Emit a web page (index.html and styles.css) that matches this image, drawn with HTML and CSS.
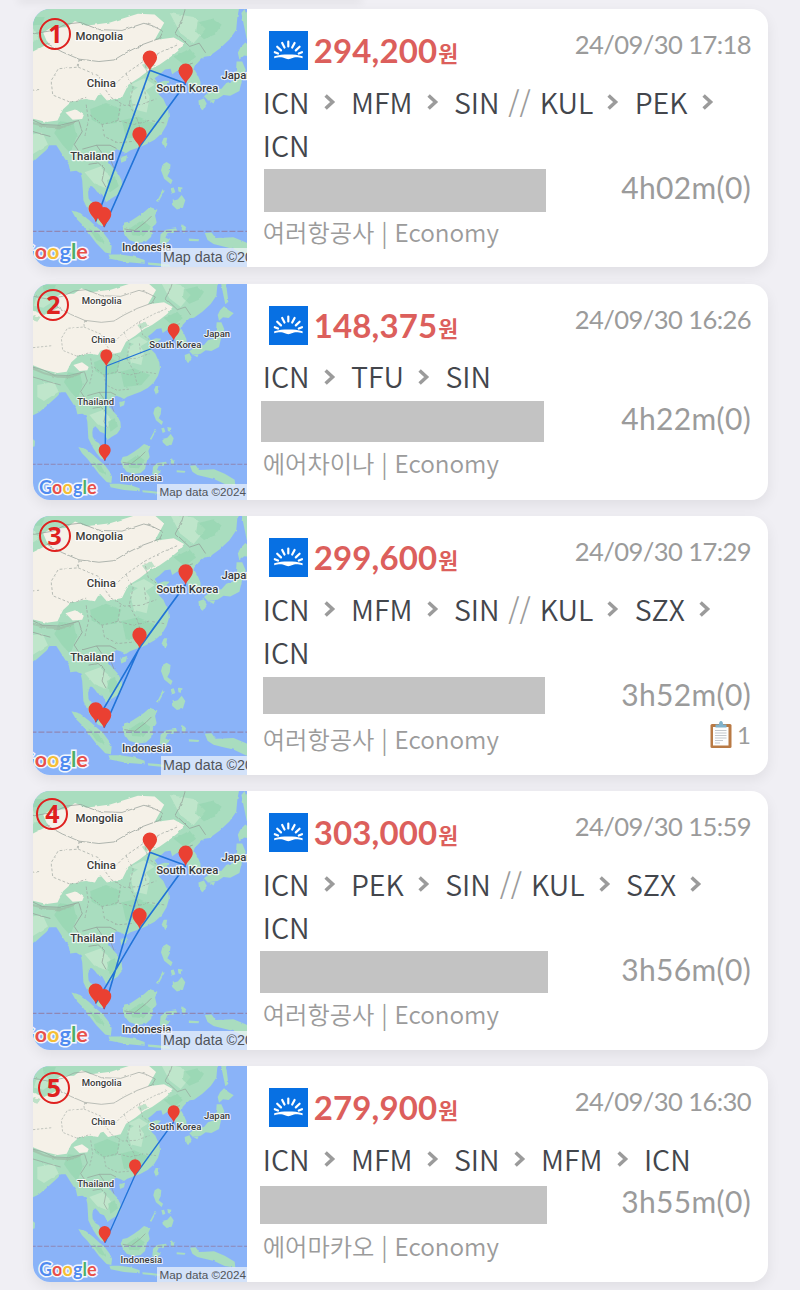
FILE: index.html
```html
<!DOCTYPE html>
<html lang="ko">

<head>
  <meta charset="UTF-8" />
  <title>항공권 목록</title>
  <link rel="stylesheet" href="styles.css">
</head>

<body>
  <!-- Shared shapes -->
  <svg class="defs" width="0" height="0">
    <defs>
      <filter id="rough" x="0" y="0" width="100%" height="100%">
        <feTurbulence type="fractalNoise" baseFrequency="0.06" numOctaves="2" seed="4" result="n" />
        <feDisplacementMap in="SourceGraphic" in2="n" scale="6" xChannelSelector="R" yChannelSelector="G" />
      </filter>

      <g id="land">
        <rect x="0" y="-10" width="700" height="720" fill="#8ab3f8" />
        <g filter="url(#rough)">
          <rect x="0" y="-10" width="700" height="720" fill="none" />
          <g fill="#a9ddbf">
            <path d="M0-10H588L580 30 577 62 560 87 535 110 510 128 497 130 485 140 476 150 472 162 480 176 487 192 488 206 478 215 463 216 456 200 452 188 444 178 438 166 428 166 416 174 412 160 398 162 384 175 372 184 380 196 396 190 412 191 400 202 386 214 382 224 394 236 400 250 406 262 408 282 402 302 390 322 372 338 350 350 330 358 310 365 300 372 288 366 276 362 266 370 258 382 256 394 266 407 280 422 289 440 291 460 279 476 262 486 250 495 245 484 240 475 228 470 222 462 214 454 207 460 205 472 206 485 214 498 225 505 233 520 238 538 242 555 230 550 218 535 208 520 200 505 193 490 192 470 190 440 186 422 175 416 160 418 156 400 146 385 134 366 125 352 110 352 100 364 85 377 65 395 45 412 27 421 0 430Z" />
            <path d="M598 10 608 40 613 80 604 88 596 50 590 20Z" />
            <path d="M588 106 600 94 614 106 629 115 614 129 597 127 585 137 581 120Z" />
            <path d="M578 142 592 142 601 163 592 186 585 216 562 228 545 226 530 236 506 239 496 229 516 213 540 210 552 196 570 190 576 170Z" />
            <path d="M482 240 496 235 503 248 493 264 484 258ZM508 240 524 238 520 247Z" />
            <path d="M395 333 406 333 403 352 396 359 390 345Z" />
            <path d="M286 382 303 377 300 391 288 396Z" />
            <path d="M392 400 402 394 412 400 410 418 404 430 417 440 413 450 396 436 388 415Z" />
            <path d="M415 492 430 488 440 477 449 490 443 509 428 513 416 502ZM412 460 420 458 424 470 416 474ZM430 456 442 458 440 470 432 468ZM378 492 394 462 397 466 382 494Z" />
            <path d="M296 546 310 543 330 530 345 520 360 507 379 514 373 528 377 546 368 560 363 582 350 594 330 597 308 590 298 577 290 560Z" />
            <path d="M163 516 185 522 208 540 224 555 242 570 257 590 264 605 262 624 248 621 225 597 205 571 190 551 174 535Z" />
            <path d="M256 626 285 626 320 631 347 640 347 649 300 645 260 637ZM355 646 382 648 410 652 408 657 356 652Z" />
            <path d="M387 575 400 564 426 560 429 567 404 573 399 584 412 590 401 598 408 613 398 616 392 600 385 598ZM442 550 452 556 448 572 440 564Z" />
            <path d="M498 572 515 571 525 585 545 584 570 583 602 596 632 614 634 632 602 627 570 612 545 606 520 600 505 590ZM458 586 484 588 482 593 458 592Z" />
            <path d="M20 486 33 498 32 514 20 518Z" />
          </g>
          <path fill="#f5f1e8" d="M0 96 60 120 104 98 92 70 110 58 150 56 172 40 200 52 260 44 330 22 372 24 396 45 372 88 420 82 446 96 430 116 410 132 384 150 360 162 334 182 306 200 290 232 252 240 238 224 200 236 166 240 142 262 128 290 100 294 60 284 27 271 0 268Z" />
          <path fill="#f5f1e8" d="M148 270 174 262 194 276 190 286 166 288ZM200 236 214 222 230 226 222 240Z" />
          <path fill="#bfe6cb" d="M36 70 70 60 80 84 58 98 30 92ZM410 20 470 30 500 60 470 96 436 70ZM310 220 340 200 360 230 352 270 320 262ZM196 420 234 406 262 430 250 460 220 448ZM40 330 90 320 104 350 60 378 40 366ZM310 200 345 184 372 200 350 214Z" />
          <path fill="#8fd3ad" opacity=".55" d="M132 292 168 296 176 330 160 372 140 350 120 322ZM480 44 520 34 540 50 524 74 496 86 476 68ZM210 262 250 246 288 262 276 296 236 300 214 288ZM290 290 330 280 378 300 352 330 300 336ZM420 130 460 110 476 130 448 152ZM30 120 50 126 40 140 20 134ZM56 30 96 30 88 50 60 52ZM310 560 340 540 362 556 344 580 316 578ZM252 440 272 430 282 454 260 470ZM340 150 364 140 372 152 350 164ZM206 560 232 574 246 600 226 590Z" />
          <path fill="#9fb5a4" d="M27 276 60 292 100 302 140 304 176 290 170 298 140 310 100 308 60 298 27 284Z" opacity=".6" />
          <path fill="none" stroke="#929b96" stroke-width="1.8" d="M0 58 70 72 116 64 150 48 186 44 232 62 290 64 345 46 366 52 394 66 384 84 340 100 300 120 270 138 232 142 182 136 140 118 100 96M0 268 60 286 90 300 134 302 182 290M182 292 190 318 170 350 186 374M190 362 226 352 260 352 276 360M226 352 240 372 262 390 270 410M206 400 230 396 246 410 240 440 250 458M27 306 74 320 110 330M452 0 440 40 424 70M424 70 460 104 484 96 500 120M430 166 446 152 468 146M296 562 322 566 350 544 364 530" />
          <path fill="none" stroke="#9aa39d" stroke-width="1.7" stroke-dasharray="7 5" d="M27 218 84 212M182 136 180 156 130 160 112 190 116 226 160 244 200 232M180 156 232 178 244 206 262 232M272 200 300 172 346 140 392 116 430 100M300 172 318 206 308 250 330 290M262 232 296 252 336 250 376 236M210 276 240 300 280 290 318 300 360 290 396 296M240 300 246 330 280 346 320 342M280 290 286 250M330 290 340 330M346 140 356 180 376 194M350 236 346 204M200 250 206 290 196 330" />
        </g>
        <path stroke="#8f87b4" stroke-width="3" stroke-dasharray="15 5" d="M0 568H700" />
      </g>

      <g id="pin">
        <path fill="#ea4032" d="M0 2C-2-9-18-18-18-32A18 18 0 0 1 18-32C18-18 2-9 0 2Z" />
      </g>

      <symbol id="sunrise" viewBox="0 0 39 39">
        <rect width="39" height="39" fill="#0770e3" />
        <path stroke="#fff" stroke-width="2.2" stroke-linecap="round" d="M19.3 10.5V15.5M13.2 12 15.5 16.5M25.6 12 23.2 16.5M8.2 15.7 12 19.4M30.6 15.7 26.8 19.4M5.8 21.2 9 22.6M33 21.2 29.8 22.6" />
        <path fill="#fff" d="M5.2 25.3C10 24 14 23.6 19.3 23.6S29 24 33.6 25.3V27.2C29.5 26 27.5 26 25 26.4L21.3 27.8Q19.3 28.6 17.3 27.8L13.8 26.4C11 26 9 26 5.2 27.2Z" />
      </symbol>

      <symbol id="chevron" viewBox="0 0 12 16">
        <path fill="none" stroke="#9b9b9b" stroke-width="3.5" d="M1.6 1.5 8.6 8 1.6 14.5" />
      </symbol>
    </defs>
  </svg>

  <div class="prev-shadow"></div>

  <main class="list">
    <!-- 1 -->
    <article class="card tall">
      <div class="map">
        <svg class="map-img" viewBox="66.4 10.2 536.9 648" preserveAspectRatio="none">
          <use href="#land" />
          <path class="path" d="M450 197 334 356 245 557M224 543 360 164 450 197" />
          <g class="places">
            <text x="233" y="87">Mongolia</text>
            <text x="238" y="205">China</text>
            <text x="454" y="218">South Korea</text>
            <text x="579" y="185">Japan</text>
            <text x="215" y="390">Thailand</text>
            <text x="352" y="617">Indonesia</text>
          </g>
          <use href="#pin" x="360" y="164" />
          <use href="#pin" x="450" y="197" />
          <use href="#pin" x="334" y="356" />
          <use href="#pin" x="224" y="543" />
          <use href="#pin" x="245" y="557" />
        </svg>
        <div class="google"><i>G</i><i>o</i><i>o</i><i>g</i><i>l</i><i>e</i></div>
        <div class="credit">Map data ©2024</div>
        <span class="num n1">1</span>
      </div>
      <div class="info">
        <div class="head">
          <svg class="logo"><use href="#sunrise" /></svg>
          <strong class="price">294,200<small>원</small></strong>
          <time>24/09/30 17:18</time>
        </div>
        <div class="route">
          <span>ICN</span><svg><use href="#chevron" /></svg><span>MFM</span><svg><use href="#chevron" /></svg><span>SIN</span><em>//</em><span>KUL</span><svg><use href="#chevron" /></svg><span>PEK</span><svg><use href="#chevron" /></svg><span>ICN</span>
        </div>
        <div class="leg"><div class="mask m1"></div><span class="dur">4h02m(0)</span></div>
        <div class="foot"><span>여러항공사 | Economy</span></div>
      </div>
    </article>

    <!-- 2 -->
    <article class="card">
      <div class="map">
        <svg class="map-img" viewBox="27 27 641 648" preserveAspectRatio="none">
          <use href="#land" />
          <path class="path" d="M449 195 247 273 243 557" />
          <g class="places">
            <text x="233" y="87">Mongolia</text>
            <text x="238" y="205">China</text>
            <text x="454" y="218">South Korea</text>
            <text x="579" y="185">Japan</text>
            <text x="215" y="390">Thailand</text>
            <text x="352" y="617">Indonesia</text>
          </g>
          <use href="#pin" x="449" y="195" />
          <use href="#pin" x="247" y="273" />
          <use href="#pin" x="242" y="557" />
        </svg>
        <div class="google"><i>G</i><i>o</i><i>o</i><i>g</i><i>l</i><i>e</i></div>
        <div class="credit">Map data ©2024</div>
        <span class="num n2">2</span>
      </div>
      <div class="info">
        <div class="head">
          <svg class="logo"><use href="#sunrise" /></svg>
          <strong class="price">148,375<small>원</small></strong>
          <time>24/09/30 16:26</time>
        </div>
        <div class="route">
          <span>ICN</span><svg><use href="#chevron" /></svg><span>TFU</span><svg><use href="#chevron" /></svg><span>SIN</span>
        </div>
        <div class="leg"><div class="mask m2"></div><span class="dur">4h22m(0)</span></div>
        <div class="foot"><span>에어차이나 | Economy</span></div>
      </div>
    </article>

    <!-- 3 -->
    <article class="card tall">
      <div class="map">
        <svg class="map-img" viewBox="66.4 26 536.9 648" preserveAspectRatio="none">
          <use href="#land" />
          <path class="path" d="M450 197 334 356 245 557M224 543 336 354 450 197" />
          <g class="places">
            <text x="233" y="87">Mongolia</text>
            <text x="238" y="205">China</text>
            <text x="454" y="218">South Korea</text>
            <text x="579" y="185">Japan</text>
            <text x="215" y="390">Thailand</text>
            <text x="352" y="617">Indonesia</text>
          </g>
          <use href="#pin" x="450" y="197" />
          <use href="#pin" x="334" y="356" />
          <use href="#pin" x="224" y="543" />
          <use href="#pin" x="245" y="557" />
        </svg>
        <div class="google"><i>G</i><i>o</i><i>o</i><i>g</i><i>l</i><i>e</i></div>
        <div class="credit">Map data ©2024</div>
        <span class="num n3">3</span>
      </div>
      <div class="info">
        <div class="head">
          <svg class="logo"><use href="#sunrise" /></svg>
          <strong class="price">299,600<small>원</small></strong>
          <time>24/09/30 17:29</time>
        </div>
        <div class="route">
          <span>ICN</span><svg><use href="#chevron" /></svg><span>MFM</span><svg><use href="#chevron" /></svg><span>SIN</span><em>//</em><span>KUL</span><svg><use href="#chevron" /></svg><span>SZX</span><svg><use href="#chevron" /></svg><span>ICN</span>
        </div>
        <div class="leg"><div class="mask m3"></div><span class="dur">3h52m(0)</span></div>
        <div class="foot">
          <span>여러항공사 | Economy</span>
          <span class="memo">
            <svg viewBox="0 0 22 27">
              <rect x=".5" y="3" width="21" height="24" rx="1.5" fill="#b97a45" />
              <path fill="#fdfdfd" d="M3 6H18.5V24.5H3Z" />
              <path stroke="#c3c7cc" stroke-width="1" d="M5 9.5H16.5M5 12H16.5M5 14.5H16.5M5 17H16.5M5 19.5H13M5 22H10" />
              <path fill="#7fb2cc" d="M5.5 3.5H9Q9 0 11 0T13 3.5H16.5V6.5H5.5Z" />
            </svg>1
          </span>
        </div>
      </div>
    </article>

    <!-- 4 -->
    <article class="card tall">
      <div class="map">
        <svg class="map-img" viewBox="66.4 10.2 536.9 648" preserveAspectRatio="none">
          <use href="#land" />
          <path class="path" d="M450 197 360 164 245 557M224 543 336 354 450 197" />
          <g class="places">
            <text x="233" y="87">Mongolia</text>
            <text x="238" y="205">China</text>
            <text x="454" y="218">South Korea</text>
            <text x="579" y="185">Japan</text>
            <text x="215" y="390">Thailand</text>
            <text x="352" y="617">Indonesia</text>
          </g>
          <use href="#pin" x="360" y="164" />
          <use href="#pin" x="450" y="197" />
          <use href="#pin" x="334" y="354" />
          <use href="#pin" x="224" y="543" />
          <use href="#pin" x="245" y="557" />
        </svg>
        <div class="google"><i>G</i><i>o</i><i>o</i><i>g</i><i>l</i><i>e</i></div>
        <div class="credit">Map data ©2024</div>
        <span class="num n4">4</span>
      </div>
      <div class="info">
        <div class="head">
          <svg class="logo"><use href="#sunrise" /></svg>
          <strong class="price">303,000<small>원</small></strong>
          <time>24/09/30 15:59</time>
        </div>
        <div class="route">
          <span>ICN</span><svg><use href="#chevron" /></svg><span>PEK</span><svg><use href="#chevron" /></svg><span>SIN</span><em>//</em><span>KUL</span><svg><use href="#chevron" /></svg><span>SZX</span><svg><use href="#chevron" /></svg><span>ICN</span>
        </div>
        <div class="leg"><div class="mask m4"></div><span class="dur">3h56m(0)</span></div>
        <div class="foot"><span>여러항공사 | Economy</span></div>
      </div>
    </article>

    <!-- 5 -->
    <article class="card">
      <div class="map">
        <svg class="map-img" viewBox="27 27 641 648" preserveAspectRatio="none">
          <use href="#land" />
          <path class="path" d="M449 195 333 355 243 557" />
          <g class="places">
            <text x="233" y="87">Mongolia</text>
            <text x="238" y="205">China</text>
            <text x="454" y="218">South Korea</text>
            <text x="579" y="185">Japan</text>
            <text x="215" y="390">Thailand</text>
            <text x="352" y="617">Indonesia</text>
          </g>
          <use href="#pin" x="449" y="195" />
          <use href="#pin" x="333" y="357" />
          <use href="#pin" x="242" y="557" />
        </svg>
        <div class="google"><i>G</i><i>o</i><i>o</i><i>g</i><i>l</i><i>e</i></div>
        <div class="credit">Map data ©2024</div>
        <span class="num n5">5</span>
      </div>
      <div class="info">
        <div class="head">
          <svg class="logo"><use href="#sunrise" /></svg>
          <strong class="price">279,900<small>원</small></strong>
          <time>24/09/30 16:30</time>
        </div>
        <div class="route">
          <span>ICN</span><svg><use href="#chevron" /></svg><span>MFM</span><svg><use href="#chevron" /></svg><span>SIN</span><svg><use href="#chevron" /></svg><span>MFM</span><svg><use href="#chevron" /></svg><span>ICN</span>
        </div>
        <div class="leg"><div class="mask m5"></div><span class="dur">3h55m(0)</span></div>
        <div class="foot"><span>에어마카오 | Economy</span></div>
      </div>
    </article>
  </main>
</body>

</html>
```

FILE: styles.css
```css
:root {
  --bg: #f0eff4;
  --text: #43464c;
  --muted: #9b9b9b;
  --price: #dc5f5c;
  --mask: #c3c3c3;
}

* {
  box-sizing: border-box;
}

body {
  margin: 0;
  height: 1290px;
  overflow: hidden;
  background: var(--bg);
  color: var(--text);
  font-family: "Noto Sans CJK KR", sans-serif;
}

.defs {
  position: absolute;
}

/* bottom shadow of the panel scrolled off above */
.prev-shadow {
  width: 340px;
  height: 0;
  margin-left: 20px;
  box-shadow: 0 0 9px 2px rgba(0, 0, 0, 0.1);
}

.list {
  display: flex;
  flex-direction: column;
  gap: 16.6px;
  padding: 9px 32px 0 33px;
}

.card {
  display: flex;
  height: 216px;
  flex: none;
  background: #fff;
  border-radius: 17px;
  overflow: hidden;
  box-shadow: 0 5px 14px rgba(0, 0, 0, 0.07);
}

.card.tall {
  height: 258.3px;
}

/* map */
.map {
  position: relative;
  width: 213.7px;
  flex: none;
  overflow: hidden;
}

.map-img {
  display: block;
  width: 100%;
  height: 100%;
}

.path {
  fill: none;
  stroke: #2173d8;
  stroke-width: 4;
  stroke-linejoin: round;
}

.places text {
  font: 500 28.5px Roboto, sans-serif;
  text-anchor: middle;
  fill: #3a3a3a;
  stroke: rgba(255, 255, 255, 0.8);
  stroke-width: 6px;
  stroke-linejoin: round;
  paint-order: stroke;
}

.google {
  position: absolute;
  left: 6px;
  bottom: 0;
  font: 700 18.2px/26px Lato, sans-serif;
  -webkit-text-stroke: 3px #f4f7fc;
  paint-order: stroke fill;
}

.google i {
  font-style: normal;
  color: #4f8bf0;
}

.google i:nth-child(2),
.google i:nth-child(6) {
  color: #e8504a;
}

.google i:nth-child(3) {
  color: #f5bf35;
}

.google i:nth-child(5) {
  color: #4bb069;
}

.credit {
  position: absolute;
  left: 124px;
  bottom: 0;
  padding: 0 20px 0 2.5px;
  font: 11.7px/15.5px "Liberation Sans", sans-serif;
  white-space: nowrap;
  color: #50545a;
  background: rgba(240, 244, 250, 0.72);
}

.tall .google {
  left: -14px;
  font-size: 21.7px;
  line-height: 31px;
}

.tall .credit {
  left: 127.5px;
  font-size: 14.3px;
  line-height: 19px;
}

.num {
  position: absolute;
  width: 32px;
  height: 32px;
  border: 2px solid #df211f;
  border-radius: 50%;
  font: 700 25px/26.5px "Noto Sans", sans-serif;
  text-align: center;
  color: #df211f;
}

.n1 { left: 6.4px; top: 9.3px; }
.n2 { left: 4.3px; top: 5px; }
.n3 { left: 5.7px; top: 3.5px; }
.n4 { left: 3.3px; top: 6.8px; }
.n5 { left: 5px; top: 6px; }

/* flight info */
.info {
  flex: 1;
  min-width: 0;
  padding: 0 17px 0 16px;
}

.head {
  display: flex;
  align-items: flex-start;
  height: 70.5px;
}

.logo {
  width: 39px;
  height: 39px;
  margin: 22px 6px 0 6px;
}

.price {
  margin-top: 21px;
  font: 700 33px/40px Lato, "Noto Sans CJK KR", sans-serif;
  letter-spacing: 0.15px;
  color: var(--price);
}

.price small {
  position: relative;
  top: -1px;
  margin-left: 1px;
  font: 700 21.7px/1 "Noto Sans CJK KR", sans-serif;
}

time {
  margin: 19px 0 0 auto;
  font: 400 25.6px/32px Lato, sans-serif;
  letter-spacing: -0.6px;
  color: var(--muted);
}

.route {
  display: flex;
  flex-wrap: wrap;
  align-items: center;
  font-weight: 350;
  font-size: 28.6px;
  line-height: 43px;
}

.route svg {
  width: 12px;
  height: 16px;
  margin: 2px 15.2px 0 14.2px;
}

.route em {
  margin: 0 8.8px;
  font-style: normal;
  color: var(--muted);
}

.leg {
  display: flex;
  justify-content: space-between;
  align-items: flex-start;
  height: 43px;
}

.mask {
  flex: none;
  background: var(--mask);
}

.m1 { width: 282px; height: 43px; margin: 3.5px 0 0 1.3px; }
.m2 { width: 283px; height: 41px; margin: 3.5px 0 0 -1.3px; }
.m3 { width: 282px; height: 37px; margin: 4px 0 0 0; }
.m4 { width: 288px; height: 42px; margin: 3.5px 0 0 -3px; }
.m5 { width: 287px; height: 38px; margin: 6.5px 0 0 -3px; }

.dur {
  font: 400 30px/43px Lato, sans-serif;
  letter-spacing: 0.35px;
  color: var(--muted);
}

.foot {
  display: flex;
  justify-content: space-between;
  font-weight: 350;
  font-size: 24.3px;
  line-height: 45px;
  color: var(--muted);
}

.memo {
  display: flex;
  align-items: center;
  gap: 5px;
  height: 38px;
  font: 400 24px/38px Lato, sans-serif;
}

.memo svg {
  width: 22px;
  height: 27px;
}
```
